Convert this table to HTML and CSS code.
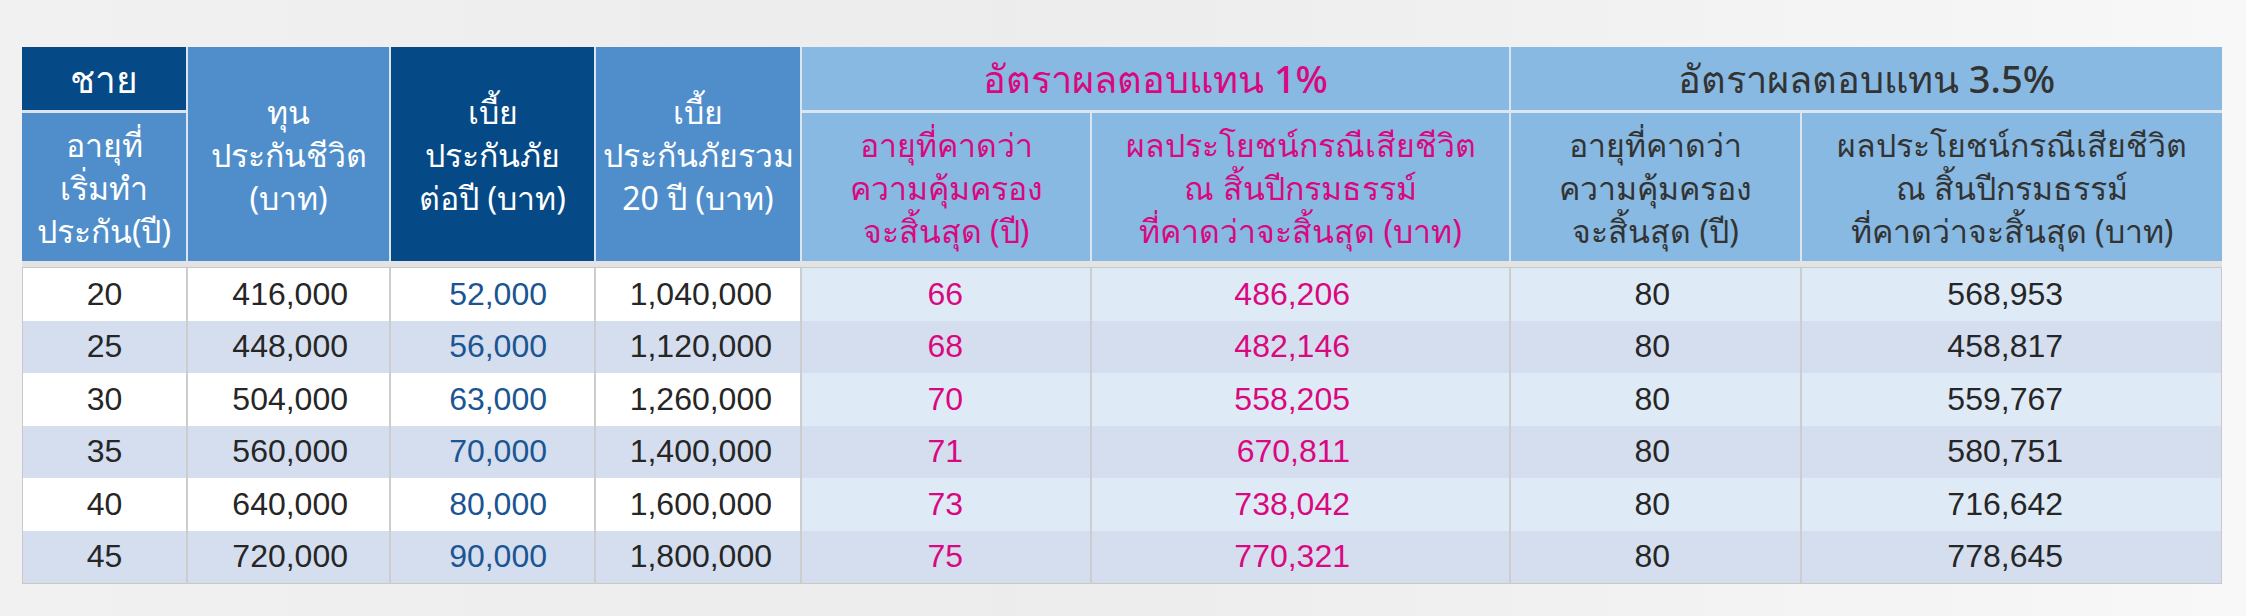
FILE: index.html
```html
<!DOCTYPE html>
<html lang="th">
<head>
<meta charset="utf-8">
<title>ตารางผลประโยชน์</title>
<link rel="stylesheet" href="styles.css">
</head>
<body>
<div class="page">
  <table class="benefit">
    <colgroup>
      <col class="c1"><col class="c2"><col class="c3"><col class="c4">
      <col class="c5"><col class="c6"><col class="c7"><col class="c8">
    </colgroup>
    <thead>
      <tr class="r1">
        <th class="dark sex">ชาย</th>
        <th class="mid span" rowspan="2">ทุน<br>ประกันชีวิต<br>(บาท)</th>
        <th class="dark span" rowspan="2">เบี้ย<br>ประกันภัย<br>ต่อปี (บาท)</th>
        <th class="mid span" rowspan="2">เบี้ย<br>ประกันภัยรวม<br>20 ปี (บาท)</th>
        <th class="light pink group" colspan="2">อัตราผลตอบแทน 1%</th>
        <th class="light ink group last" colspan="2">อัตราผลตอบแทน 3.5%</th>
      </tr>
      <tr class="r2">
        <th class="mid">อายุที่<br>เริ่มทำ<br>ประกัน(ปี)</th>
        <th class="light pink">อายุที่คาดว่า<br>ความคุ้มครอง<br>จะสิ้นสุด (ปี)</th>
        <th class="light pink">ผลประโยชน์กรณีเสียชีวิต<br>ณ สิ้นปีกรมธรรม์<br>ที่คาดว่าจะสิ้นสุด (บาท)</th>
        <th class="light ink">อายุที่คาดว่า<br>ความคุ้มครอง<br>จะสิ้นสุด (ปี)</th>
        <th class="light ink last">ผลประโยชน์กรณีเสียชีวิต<br>ณ สิ้นปีกรมธรรม์<br>ที่คาดว่าจะสิ้นสุด (บาท)</th>
      </tr>
    </thead>
    <tbody>
      <tr><td class="n1">20</td><td class="n2">416,000</td><td class="n3">52,000</td><td class="n4">1,040,000</td><td class="n5">66</td><td class="n6">486,206</td><td class="n7">80</td><td class="n8">568,953</td></tr>
      <tr class="alt"><td class="n1">25</td><td class="n2">448,000</td><td class="n3">56,000</td><td class="n4">1,120,000</td><td class="n5">68</td><td class="n6">482,146</td><td class="n7">80</td><td class="n8">458,817</td></tr>
      <tr><td class="n1">30</td><td class="n2">504,000</td><td class="n3">63,000</td><td class="n4">1,260,000</td><td class="n5">70</td><td class="n6">558,205</td><td class="n7">80</td><td class="n8">559,767</td></tr>
      <tr class="alt"><td class="n1">35</td><td class="n2">560,000</td><td class="n3">70,000</td><td class="n4">1,400,000</td><td class="n5">71</td><td class="n6">670,811</td><td class="n7">80</td><td class="n8">580,751</td></tr>
      <tr><td class="n1">40</td><td class="n2">640,000</td><td class="n3">80,000</td><td class="n4">1,600,000</td><td class="n5">73</td><td class="n6">738,042</td><td class="n7">80</td><td class="n8">716,642</td></tr>
      <tr class="alt"><td class="n1">45</td><td class="n2">720,000</td><td class="n3">90,000</td><td class="n4">1,800,000</td><td class="n5">75</td><td class="n6">770,321</td><td class="n7">80</td><td class="n8">778,645</td></tr>
    </tbody>
  </table>
</div>
</body>
</html>
```

FILE: styles.css
```css
html, body {
  margin: 0;
  padding: 0;
}

body {
  width: 2246px;
  height: 616px;
  overflow: hidden;
  background: linear-gradient(90deg, #f1f1f1 0%, #ececec 45%, #f2f2f2 75%, #f8f8f8 100%);
  font-family: "Noto Sans", "Liberation Sans", sans-serif;
}

.page {
  padding: 47px 24px 0 22px;
}

.benefit {
  width: 2200px;
  table-layout: fixed;
  border-collapse: separate;
  border-spacing: 0;
}

.c1 { width: 166px; }
.c2 { width: 203px; }
.c3 { width: 205px; }
.c4 { width: 206px; }
.c5 { width: 290px; }
.c6 { width: 419px; }
.c7 { width: 291px; }
.c8 { width: 420px; }

/* ---------- header ---------- */
.benefit th {
  padding: 0;
  font-weight: 400;
  font-size: 32px;
  line-height: 43px;
  text-align: center;
  vertical-align: middle;
  border-right: 2px solid #dbe5ef;
  box-sizing: border-box;
}

.benefit th.last {
  border-right: 0;
}

.r1 th {
  height: 66px;
  border-bottom: 3px solid #dbe5ef;
}

.r1 th.span {
  border-bottom: 6px solid #e3e3e3;
}

.r2 th {
  height: 154px;
  border-bottom: 6px solid #e3e3e3;
}

.dark {
  background: #054a86;
  color: #ffffff;
}

.mid {
  background: #4f8ecb;
  color: #ffffff;
}

.light {
  background: #87b9e2;
}

.pink {
  color: #d9087f;
}

.ink {
  color: #333333;
}

.benefit th.sex {
  font-size: 37px;
}

.benefit th.group {
  font-size: 38px;
  font-weight: 500;
}

/* ---------- body ---------- */
.benefit td {
  height: 52.5px;
  padding: 0;
  box-sizing: border-box;
  font-family: "Liberation Sans", Arial, sans-serif;
  font-size: 32px;
  color: #262626;
  text-align: right;
  vertical-align: middle;
  background: #ffffff;
  border-right: 2px solid #cdcdcd;
}

.benefit tbody tr:first-child td {
  border-top: 1px solid #c9c9c9;
  height: 53.5px;
}

.benefit tbody tr:last-child td {
  border-bottom: 1px solid #c9c9c9;
  height: 53.5px;
}

.benefit td.n1 {
  border-left: 1px solid #c9c9c9;
  text-align: center;
}

.benefit td.n8 {
  border-right: 1px solid #c9c9c9;
}

.benefit td.n5,
.benefit td.n6,
.benefit td.n7,
.benefit td.n8 {
  background: #dfeaf7;
}

.benefit tr.alt td {
  background: #d4deef;
}

.benefit td.n2 { padding-right: 41px; }
.benefit td.n3 { padding-right: 47px; color: #1b5592; }
.benefit td.n4 { padding-right: 28px; }
.benefit td.n5 { padding-right: 127px; color: #d9087f; }
.benefit td.n6 { padding-right: 159px; color: #d9087f; }
.benefit td.n7 { padding-right: 130px; }
.benefit td.n8 { padding-right: 158px; }
```
